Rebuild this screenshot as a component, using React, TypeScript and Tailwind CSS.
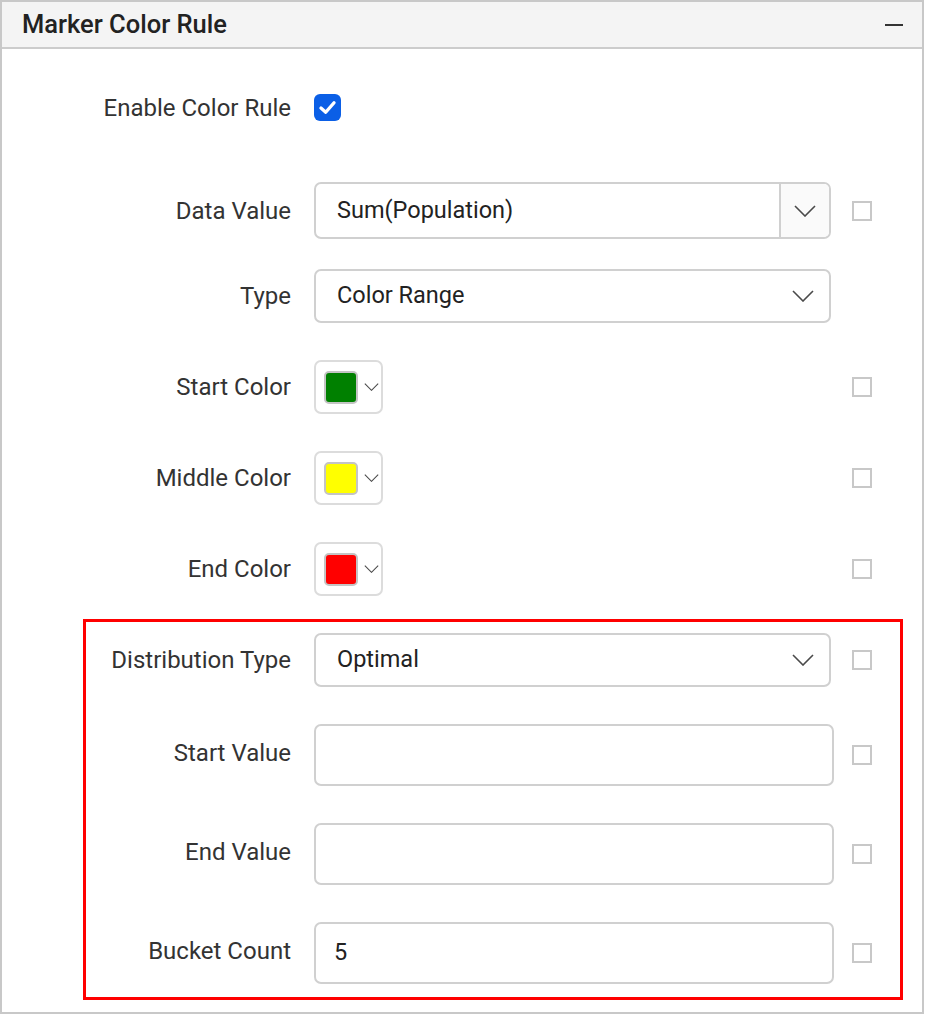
const Chevron = ({ className }: { className: string }) => (
  <svg viewBox="0 0 22 12" className={className} fill="none" stroke="#4a4a4a" strokeWidth="1.6">
    <polyline points="1,1 11,11 21,1" />
  </svg>
);

const SmallBox = () => <div className="w-[20px] h-[20px] border-2 border-[#c8c8c8] bg-white" />;

const Row = ({
  label,
  labelWidth,
  mt,
  h,
  children,
  box = true,
  raise = false,
}: {
  label: string;
  labelWidth: string;
  mt: string;
  h: string;
  children: React.ReactNode;
  box?: boolean;
  raise?: boolean;
}) => (
  <div className={`flex items-center ${mt} ${h}`}>
    <div className={`${labelWidth} text-right text-[24px] text-[#333333] shrink-0 ${raise ? "pb-[5px]" : ""}`}>{label}</div>
    <div className="ml-[23px] w-[520px] shrink-0 flex items-center h-full">{children}</div>
    <div className="ml-[18px] w-[20px] h-[20px] shrink-0">{box && <SmallBox />}</div>
  </div>
);

const Dropdown = ({ value, split = false }: { value: string; split?: boolean }) => (
  <div className="w-[517px] h-full flex items-stretch border-2 border-[#d0d0d0] rounded-[7px] bg-white overflow-hidden">
    <div className="flex-1 flex items-center pl-[21px] text-[23.5px] text-[#222222]">{value}</div>
    {split ? (
      <div className="w-[50px] border-l-2 border-[#d0d0d0] bg-[#fafafa] flex items-center justify-center">
        <Chevron className="w-[22px] h-[12px]" />
      </div>
    ) : (
      <div className="w-[50px] flex items-center justify-center pr-[2px]">
        <Chevron className="w-[22px] h-[12px]" />
      </div>
    )}
  </div>
);

const ColorPicker = ({ color }: { color: string }) => (
  <div className="w-[69px] h-full border-2 border-[#dcdcdc] rounded-[7px] bg-white flex items-center pl-[8px]">
    <div className={`w-[34px] h-[33px] rounded-[5px] border-2 border-[#c4c4c4] ${color}`} />
    <Chevron className="w-[15px] h-[8px] ml-[6px]" />
  </div>
);

const TextInput = ({ value = "" }: { value?: string }) => (
  <div className="w-[520px] h-full border-2 border-[#d0d0d0] rounded-[7px] bg-white flex items-center pl-[18px] text-[23.5px] text-[#222222]">
    {value}
  </div>
);

export default function App() {
  return (
    <div className="w-[926px] h-[1014px] bg-white" style={{ fontFamily: "Roboto, 'Liberation Sans', sans-serif" }}>
      <div className="w-[924px] h-[1014px] border-2 border-[#c8c8c8] flex flex-col">
        <div className="h-[47px] shrink-0 bg-[#f4f4f4] border-b-2 border-[#cccccc] flex items-center justify-between pl-[20px] pr-[19px]">
          <span className="text-[25.5px] font-medium text-[#222222]">Marker Color Rule</span>
          <div className="w-[18px] h-[2px] bg-[#333333]" />
        </div>

        <div className="flex flex-col">
          <div className="flex items-center mt-[45px] h-[27px]">
            <div className="w-[289px] text-right text-[24px] text-[#333333]">Enable Color Rule</div>
            <div className="ml-[23px] w-[27px] h-[27px] rounded-[6px] bg-[#0b5fe6] flex items-center justify-center">
              <svg viewBox="0 0 16 16" className="w-[19px] h-[19px]" fill="none" stroke="white" strokeWidth="2.8" strokeLinecap="round" strokeLinejoin="round">
                <polyline points="2.5,8.5 6.5,12 13.5,4" />
              </svg>
            </div>
          </div>

          <Row label="Data Value" labelWidth="w-[289px]" mt="mt-[61px]" h="h-[57px]">
            <Dropdown value="Sum(Population)" split />
          </Row>
          <Row label="Type" labelWidth="w-[289px]" mt="mt-[30px]" h="h-[54px]" box={false}>
            <Dropdown value="Color Range" />
          </Row>
          <Row label="Start Color" labelWidth="w-[289px]" mt="mt-[37px]" h="h-[54px]">
            <ColorPicker color="bg-[#008000]" />
          </Row>
          <Row label="Middle Color" labelWidth="w-[289px]" mt="mt-[37px]" h="h-[54px]">
            <ColorPicker color="bg-[#ffff00]" />
          </Row>
          <Row label="End Color" labelWidth="w-[289px]" mt="mt-[37px]" h="h-[54px]">
            <ColorPicker color="bg-[#ff0000]" />
          </Row>

          <div className="ml-[81px] mt-[23px] w-[820px] border-[3px] border-[#ff0000] pb-[13px]">
            <Row label="Distribution Type" labelWidth="w-[205px]" mt="mt-[11px]" h="h-[54px]">
              <Dropdown value="Optimal" />
            </Row>
            <Row label="Start Value" labelWidth="w-[205px]" mt="mt-[37px]" h="h-[62px]" raise>
              <TextInput />
            </Row>
            <Row label="End Value" labelWidth="w-[205px]" mt="mt-[37px]" h="h-[62px]" raise>
              <TextInput />
            </Row>
            <Row label="Bucket Count" labelWidth="w-[205px]" mt="mt-[37px]" h="h-[62px]" raise>
              <TextInput value="5" />
            </Row>
          </div>
        </div>
      </div>
    </div>
  );
}
